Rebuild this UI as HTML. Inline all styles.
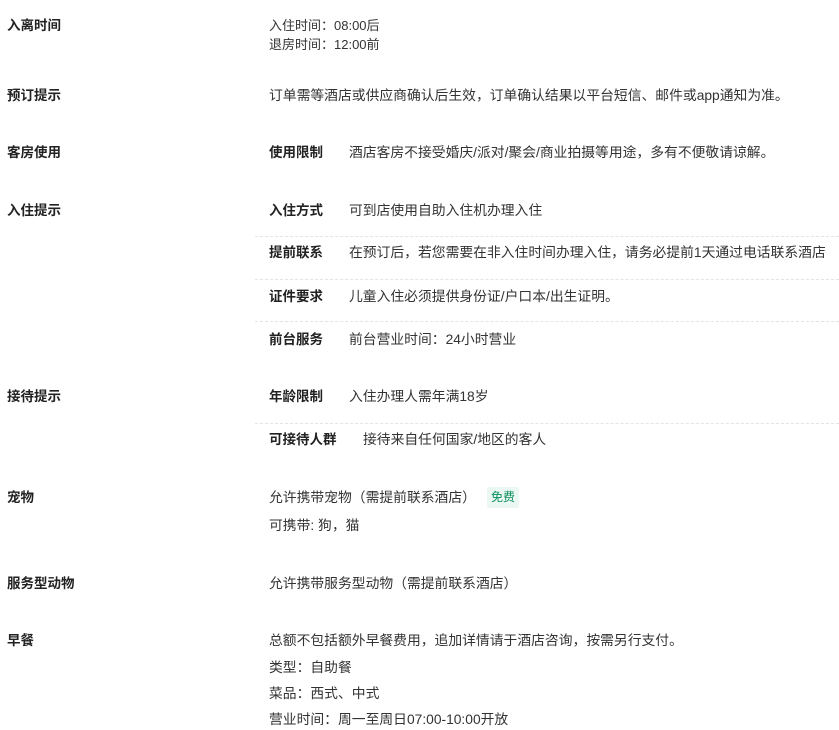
<!DOCTYPE html>
<html><head><meta charset="utf-8"><style>
body{margin:0;width:839px;height:730px;background:#fff;position:relative;overflow:hidden;font-family:"Liberation Sans","Noto Sans CJK SC",sans-serif;font-size:13.8px;color:#333}
.t{position:absolute;line-height:16px;white-space:nowrap;margin-top:1px}
.b{font-weight:bold;color:#222;font-size:13.5px}
.l{position:absolute;left:255px;right:0;border-top:1px dashed #e4e4e4;height:0}
.tag{position:absolute;left:487px;top:487px;width:32px;height:21px;background:#ebf7f3;color:#0a8f5b;line-height:21px;text-align:center;border-radius:2px;font-size:12px}
</style></head><body>
<div class="t b" style="left:7px;top:17px">入离时间</div>
<div class="t" style="left:269px;top:17px;font-size:13px">入住时间：08:00后</div>
<div class="t" style="left:269px;top:36px;font-size:13px">退房时间：12:00前</div>
<div class="t b" style="left:7px;top:87px">预订提示</div>
<div class="t" style="left:269px;top:87px">订单需等酒店或供应商确认后生效，订单确认结果以平台短信、邮件或app通知为准。</div>
<div class="t b" style="left:7px;top:144px">客房使用</div>
<div class="t b" style="left:269px;top:144px">使用限制</div>
<div class="t" style="left:349px;top:144px">酒店客房不接受婚庆/派对/聚会/商业拍摄等用途，多有不便敬请谅解。</div>
<div class="t b" style="left:7px;top:202px">入住提示</div>
<div class="t b" style="left:269px;top:202px">入住方式</div>
<div class="t" style="left:349px;top:202px">可到店使用自助入住机办理入住</div>
<div class="l" style="top:236px"></div>
<div class="t b" style="left:269px;top:244px">提前联系</div>
<div class="t" style="left:349px;top:244px">在预订后，若您需要在非入住时间办理入住，请务必提前1天通过电话联系酒店</div>
<div class="l" style="top:279px"></div>
<div class="t b" style="left:269px;top:288px">证件要求</div>
<div class="t" style="left:349px;top:288px">儿童入住必须提供身份证/户口本/出生证明。</div>
<div class="l" style="top:321px"></div>
<div class="t b" style="left:269px;top:331px">前台服务</div>
<div class="t" style="left:349px;top:331px">前台营业时间：24小时营业</div>
<div class="t b" style="left:7px;top:388px">接待提示</div>
<div class="t b" style="left:269px;top:388px">年龄限制</div>
<div class="t" style="left:349px;top:388px">入住办理人需年满18岁</div>
<div class="l" style="top:423px"></div>
<div class="t b" style="left:269px;top:431px">可接待人群</div>
<div class="t" style="left:363px;top:431px">接待来自任何国家/地区的客人</div>
<div class="t b" style="left:7px;top:489px">宠物</div>
<div class="t" style="left:269px;top:489px">允许携带宠物（需提前联系酒店）</div>
<div class="tag">免费</div>
<div class="t" style="left:269px;top:517px">可携带: 狗，猫</div>
<div class="t b" style="left:7px;top:575px">服务型动物</div>
<div class="t" style="left:269px;top:575px">允许携带服务型动物（需提前联系酒店）</div>
<div class="t b" style="left:7px;top:632px">早餐</div>
<div class="t" style="left:269px;top:632px">总额不包括额外早餐费用，追加详情请于酒店咨询，按需另行支付。</div>
<div class="t" style="left:269px;top:659px">类型：自助餐</div>
<div class="t" style="left:269px;top:685px">菜品：西式、中式</div>
<div class="t" style="left:269px;top:711px">营业时间：周一至周日07:00-10:00开放</div>
</body></html>
